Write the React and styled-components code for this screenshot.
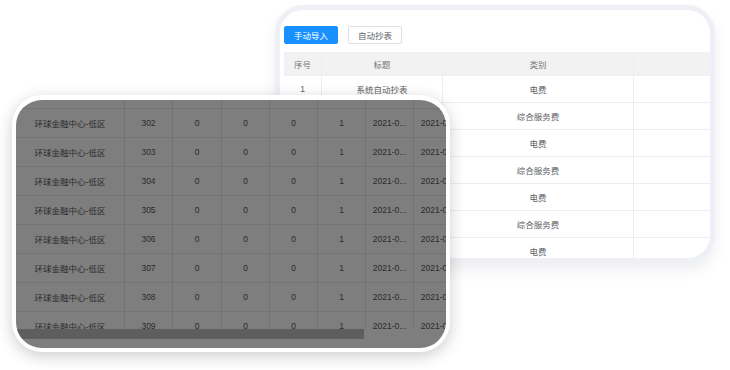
import styled, { createGlobalStyle } from "styled-components";

const GlobalStyle = createGlobalStyle`
    html, body {
        margin: 0;
        padding: 0;
        background: #ffffff;
    }
    * {
        box-sizing: border-box;
    }
`

const Stage = styled.div`
    position: relative;
    width: 730px;
    height: 370px;
    overflow: hidden;
    font-family: "Liberation Sans", "Noto Sans CJK SC", sans-serif;
    font-size: 8.5px;
`

// back window: the plain table
const BackCard = styled.div`
    position: absolute;
    left: 275px;
    top: 5px;
    width: 440px;
    height: 258px;
    border: 5px solid #eef0f5;
    border-radius: 28px;
    background: #fff;
    box-shadow: 0 8px 14px rgba(40, 50, 80, 0.08);
    overflow: hidden;
    padding: 16px 0 0 4px;
    display: flex;
    flex-direction: column;
    gap: 8px;
`

const Toolbar = styled.div`
    display: flex;
    gap: 10px;
`

const Button = styled.div`
    width: 54px;
    height: 18px;
    border-radius: 2px;
    display: flex;
    align-items: center;
    justify-content: center;
    background: ${props => props.primary ? "#1890ff" : "#fff"};
    color: ${props => props.primary ? "#fff" : "#606266"};
    border: 1px solid ${props => props.primary ? "#1890ff" : "#dcdfe6"};
`

const Table = styled.div`
    width: 470px;
`

const Row = styled.div`
    display: grid;
    grid-template-columns: 38px 121px 191px 120px;
    height: ${props => props.head ? "24px" : "27px"};
    background: ${props => props.head ? "#f2f2f3" : "#fff"};
    color: ${props => props.head ? "#777" : "#606266"};
`

const Cell = styled.div`
    display: flex;
    align-items: center;
    justify-content: center;
    border-right: 1px solid #ebeef5;
    border-bottom: 1px solid #ebeef5;
    white-space: nowrap;
`

// front window: dimmed, scrolled table
const FrontCard = styled.div`
    position: absolute;
    left: 12px;
    top: 95px;
    width: 438px;
    height: 257px;
    border-style: solid;
    border-color: #fff;
    border-width: 5px 4px 4px 4px;
    border-radius: 30px;
    background: #7e7e7e;
    box-shadow: 0 4px 16px rgba(0, 0, 0, 0.2);
    overflow: hidden;
    display: flex;
    flex-direction: column;
`

const Viewport = styled.div`
    height: 229px;
    overflow: hidden;
`

const ScrolledList = styled.div`
    margin-top: -20px;
    width: 470px;
`

const DimRow = styled.div`
    display: grid;
    grid-template-columns: 109px 48px 49px 48px 48px 48px 48px 48px;
    height: 29px;
    color: #2a2b2e;
`

const DimCell = styled.div`
    display: flex;
    align-items: center;
    justify-content: center;
    border-right: 1px solid #727376;
    border-bottom: 1px solid #727376;
    white-space: nowrap;
`

const ScrollTrack = styled.div`
    height: 10px;
`

const ScrollThumb = styled.div`
    width: 348px;
    height: 100%;
    background: #5e5e5e;
`

const backRows = [
    ["1", "系统自动抄表", "电费"],
    ["", "", "综合服务费"],
    ["", "", "电费"],
    ["", "", "综合服务费"],
    ["", "", "电费"],
    ["", "", "综合服务费"],
    ["", "", "电费"],
]

const frontRows = [301, 302, 303, 304, 305, 306, 307, 308, 309]

const App = () => {
    return (
        <Stage>
            <GlobalStyle />
            <BackCard>
                <Toolbar>
                    <Button primary>手动导入</Button>
                    <Button>自动抄表</Button>
                </Toolbar>
                <Table>
                    <Row head>
                        <Cell>序号</Cell>
                        <Cell>标题</Cell>
                        <Cell>类别</Cell>
                        <Cell />
                    </Row>
                    {backRows.map((r, i) => (
                        <Row key={i}>
                            <Cell>{r[0]}</Cell>
                            <Cell>{r[1]}</Cell>
                            <Cell>{r[2]}</Cell>
                            <Cell />
                        </Row>
                    ))}
                </Table>
            </BackCard>

            <FrontCard>
                <Viewport>
                    <ScrolledList>
                        {frontRows.map(n => (
                            <DimRow key={n}>
                                <DimCell>环球金融中心-低区</DimCell>
                                <DimCell>{n}</DimCell>
                                <DimCell>0</DimCell>
                                <DimCell>0</DimCell>
                                <DimCell>0</DimCell>
                                <DimCell>1</DimCell>
                                <DimCell>2021-0...</DimCell>
                                <DimCell>2021-0...</DimCell>
                            </DimRow>
                        ))}
                    </ScrolledList>
                </Viewport>
                <ScrollTrack>
                    <ScrollThumb />
                </ScrollTrack>
            </FrontCard>
        </Stage>
    );
}

export default App;
